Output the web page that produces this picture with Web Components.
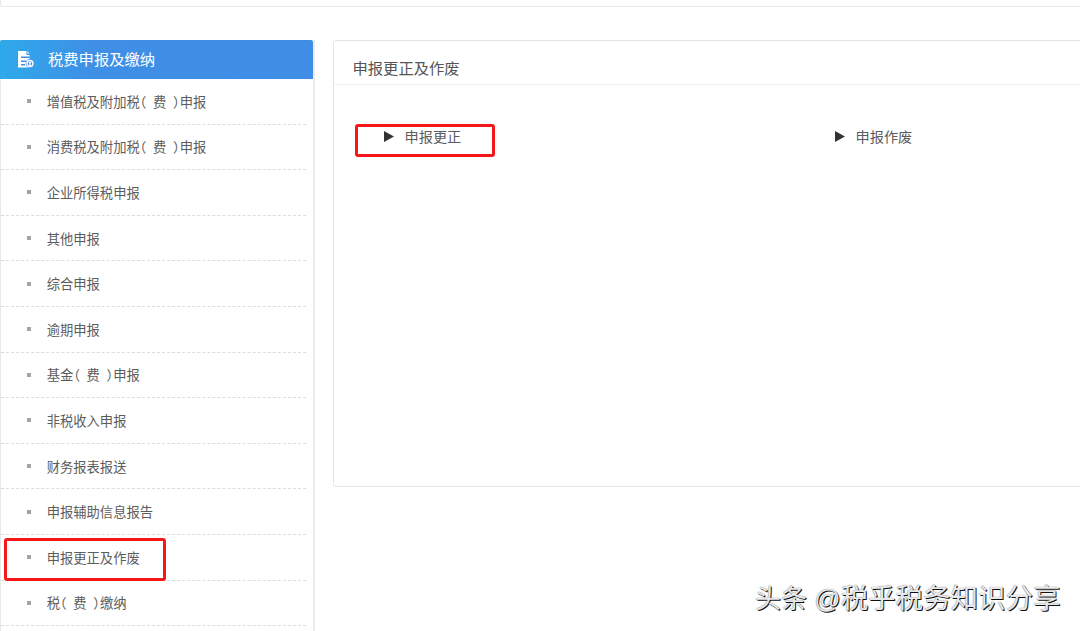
<!DOCTYPE html>
<html lang="zh-CN"><head><meta charset="utf-8"><title>申报更正及作废</title>
<style>
html,body{margin:0;padding:0;width:1080px;height:631px;overflow:hidden;background:#fff;font-family:"Liberation Sans","Noto Sans CJK SC",sans-serif;color:#555}
</style></head><body>
<tax-page>
  <tax-sidebar title-text="税费申报及缴纳">
    <tax-item>增值税及附加税<b>（</b>费<u>）</u>申报</tax-item>
    <tax-item>消费税及附加税<b>（</b>费<u>）</u>申报</tax-item>
    <tax-item>企业所得税申报</tax-item>
    <tax-item>其他申报</tax-item>
    <tax-item>综合申报</tax-item>
    <tax-item>逾期申报</tax-item>
    <tax-item>基金<b>（</b>费<u>）</u>申报</tax-item>
    <tax-item>非税收入申报</tax-item>
    <tax-item>财务报表报送</tax-item>
    <tax-item>申报辅助信息报告</tax-item>
    <tax-item marked>申报更正及作废</tax-item>
    <tax-item>税<b>（</b>费<u>）</u>缴纳</tax-item>
  </tax-sidebar>
  <tax-panel title-text="申报更正及作废">
    <tax-link marked>申报更正</tax-link>
    <tax-link>申报作废</tax-link>
  </tax-panel>
</tax-page>
<tax-watermark>头条 @<span>税乎税务知识分享</span></tax-watermark>
<script>
function def(name, html, setup){
  customElements.define(name, class extends HTMLElement{
    constructor(){super();const r=this.attachShadow({mode:'open'});r.innerHTML=html;}
    connectedCallback(){if(setup)setup(this,this.shadowRoot);}
  });
}
const CJK='"Liberation Sans","Noto Sans CJK SC",sans-serif';
def('tax-page',`<style>
:host{display:block;width:1080px;height:631px;overflow:hidden;font-family:${CJK}}
.top{height:6px;border:1px solid #e8e8e8;border-top:0;border-radius:0 0 3px 3px;margin-right:-6px}
.row{display:flex;gap:18px;margin-top:33px;align-items:flex-start;width:1110px}
</style><div class="top"></div><div class="row"><slot></slot></div>`);
def('tax-sidebar',`<style>
:host{display:block;flex:0 0 315px;box-sizing:border-box;border-left:1px solid #e8e8e8;border-right:2px solid #ececec;height:640px}
.h{height:38.5px;margin:0 0 0 -1px;border-radius:2px 2px 0 0;background:linear-gradient(90deg,#2fa9ea 0,#3f8fe6 30%,#408de6 100%);display:flex;align-items:center;color:#fff;font-size:15.3px;padding-left:18px;gap:14px}
.h span{margin-bottom:2px}
svg{display:block;flex:none}
.list{display:flex;flex-direction:column;padding:.5px 7px 0 0}
</style><div class="h"><svg width="16" height="17" viewBox="0 0 16 17"><path fill="#fff" d="M0 0H8.500V4H11.500V16.500H0z"/><path fill="#fff" d="M9.500 0L11.500 2.500H9.500z"/><path fill="#3f90e6" d="M3 5.500H11.500V7H3zM3 9.500H8V11H3zM3 13H7V14.500H3z"/><circle cx="12" cy="12.500" r="4.400" fill="#3f90e6"/><circle cx="12" cy="12.500" r="3" fill="none" stroke="#fff" stroke-width="1.400"/><path fill="#fff" d="M10.300 12L12 10.300L13.700 12H12.700V15H11.300V12z"/></svg><span id="t"></span></div><div class="list"><slot></slot></div>`,
(el,r)=>{r.getElementById('t').textContent=el.getAttribute('title-text');});
def('tax-item',`<style>
:host{display:flex;position:relative;align-items:center;box-sizing:border-box;height:45.6px;border-bottom:1px dashed #dcdcdc;font-size:13.3px;color:#5c5c5c;padding:0 0 0 26px;gap:15.7px}
i{display:block;width:4px;height:4px;background:#a3a3a3;flex:none}
::slotted(b),::slotted(u){font-weight:400;text-decoration:none;font-feature-settings:"halt"}
::slotted(b){margin-right:6.65px}
::slotted(u){margin-left:6.65px}
.mark{display:none;position:absolute;left:3px;top:3px;width:162px;height:43px;box-sizing:border-box;border:3px solid #f5171a;border-radius:3px}
:host([marked]) .mark{display:block}
</style><i></i><span><slot></slot></span><div class="mark"></div>`);
def('tax-panel',`<style>
:host{display:block;flex:0 0 770px;box-sizing:border-box;height:447px;border:1px solid #e4e4e4;border-radius:3px}
.h{height:44px;box-sizing:border-box;border-bottom:1px solid #f0f0f0;font-size:15.3px;color:#555;padding:9px 0 0 18.5px;display:flex;align-items:center}
.b{display:grid;grid-template-columns:451px 300px;padding-top:37.5px}
</style><div class="h"><span id="t"></span></div><div class="b"><slot></slot></div>`,
(el,r)=>{r.getElementById('t').textContent=el.getAttribute('title-text');});
def('tax-link',`<style>
:host{display:flex;position:relative;align-items:center;height:27px;font-size:14.2px;color:#5c5c5c;padding-left:50px;gap:10.500px}
svg{display:block;flex:none}
.mark{display:none;position:absolute;left:21px;top:1.5px;width:140px;height:33px;box-sizing:border-box;border:3px solid #f5171a;border-radius:3px}
:host([marked]) .mark{display:block}
</style><svg width="10" height="11" viewBox="0 0 10 11"><path fill="#333" d="M0 0l10 5.500L0 11z"/></svg><span><slot></slot></span><div class="mark"></div>`);
def('tax-watermark',`<style>
:host{position:absolute;left:755px;top:582px;font-size:26px;line-height:34px;color:#e8e8e8;white-space:nowrap;font-family:${CJK};text-shadow:1px 1px 0 #111,0 0 1px #555}
::slotted(span){font-size:27.500px}
</style><slot></slot>`);
</script>
</body></html>
